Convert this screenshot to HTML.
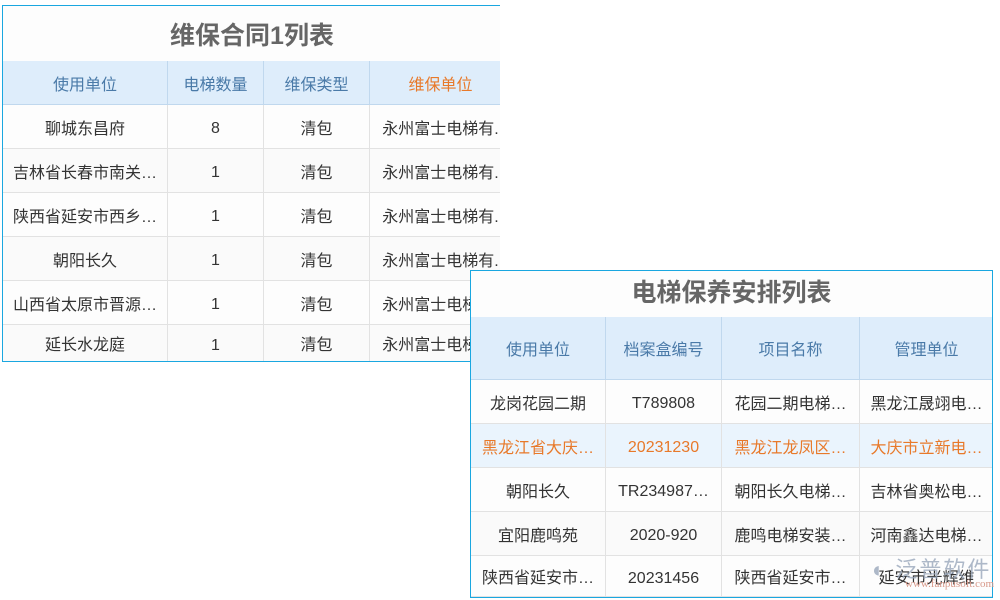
<!DOCTYPE html>
<html><head><meta charset="utf-8"><style>
*{margin:0;padding:0;box-sizing:border-box}
body{width:1000px;height:600px;background:#fff;position:relative;overflow:hidden;font-family:"Liberation Sans","Noto Sans CJK SC",sans-serif;font-size:16px;color:#333}
.box{position:absolute;background:#fdfdfd;border:1px solid #1aa7e0;overflow:hidden}
.title{position:absolute;left:0;right:0;text-align:center;font-weight:bold;color:#666;font-size:25px}
.c{position:absolute;display:flex;align-items:center;justify-content:center;white-space:nowrap;overflow:hidden;border-right:1px solid #e2e2e2;border-bottom:1px solid #e2e2e2}
.h{background:#deedfb;color:#4a7aa8;border-color:#c0d8ee}
.o{color:#e8792a}
.hl{background:#eaf4fd}
</style></head><body>
<div class="box" style="left:2px;top:5px;height:357px;border-right:none;width:498px">
<div class="title" style="top:10px;width:498px">维保合同1列表</div>
<div style="position:absolute;left:0;top:55px;width:510px;border-top:1px solid #8cc0e8"></div>
<div id="t1"></div>
</div>
<div class="box" style="left:470px;top:270px;width:523px;height:328px;z-index:2">
<div class="title" style="top:2px">电梯保养安排列表</div>
<div style="position:absolute;left:0;top:46px;width:523px;border-top:1px solid #8cc0e8"></div>
<div id="t2"></div>
</div>
<div style="position:absolute;left:872px;top:552px;z-index:5;font-size:22px;color:#9aa8bc;opacity:.8;letter-spacing:2px">◐ 泛普软件</div>
<div style="position:absolute;left:905px;top:578px;z-index:5;font-size:11px;color:#d8998a;font-family:'Liberation Serif',serif">www.fanpusoft.com</div>
<script>
function build(id,x0,cols,y0,hh,rh,head,rows,bot,oc,hlr){
 var o='',xs=[x0];cols.forEach(function(w){xs.push(xs[xs.length-1]+w)});
 head.forEach(function(t,i){o+='<div class="c h'+(i==oc?' o':'')+'" style="left:'+xs[i]+'px;top:'+y0+'px;width:'+cols[i]+'px;height:'+hh+'px">'+t+'</div>'});
 rows.forEach(function(r,j){var y=y0+hh+j*rh,h=Math.min(rh,bot-y);r.forEach(function(t,i){var pad=/[\u4e00-\u9fff]/.test(t)?'':'padding-top:5px;';o+='<div class="c'+(j===hlr?' o hl':'')+'" style="'+pad+'left:'+xs[i]+'px;top:'+y+'px;width:'+cols[i]+'px;height:'+h+'px;'+(j%2?'background:'+(j===hlr?'#eaf4fd':'#fafafa'):'')+'">'+t+'</div>'})});
 document.getElementById(id).outerHTML=o;
}
build('t1',0,[165,96,106,142],55,44,44,['使用单位','电梯数量','维保类型','维保单位'],[
['聊城东昌府','8','清包','永州富士电梯有.'],['吉林省长春市南关…','1','清包','永州富士电梯有.'],['陕西省延安市西乡…','1','清包','永州富士电梯有.'],['朝阳长久','1','清包','永州富士电梯有.'],['山西省太原市晋源…','1','清包','永州富士电梯有.'],['延长水龙庭','1','清包','永州富士电梯有.']],356,3,-1);
build('t2',0,[135,116,138,134],46,63,44,['使用单位','档案盒编号','项目名称','管理单位'],[
['龙岗花园二期','T789808','花园二期电梯…','黑龙江晟翊电…'],['黑龙江省大庆…','20231230','黑龙江龙凤区…','大庆市立新电…'],['朝阳长久','TR234987…','朝阳长久电梯…','吉林省奥松电…'],['宜阳鹿鸣苑','2020-920','鹿鸣电梯安装…','河南鑫达电梯…'],['陕西省延安市…','20231456','陕西省延安市…','延安市光辉维']],326,-1,1);
</script>
</body></html>
